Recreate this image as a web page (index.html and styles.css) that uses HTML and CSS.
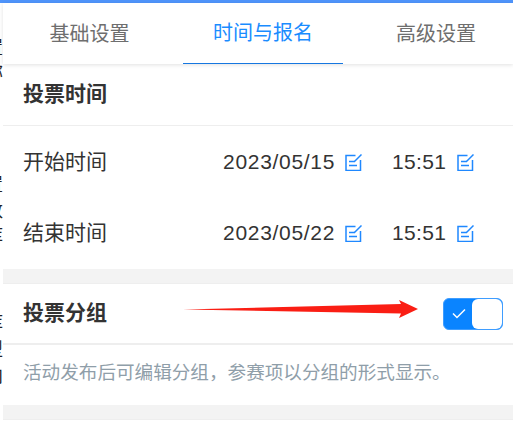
FILE: index.html
```html
<!DOCTYPE html>
<html lang="zh">
<head>
<meta charset="utf-8">
<title>投票时间</title>
<link rel="stylesheet" href="styles.css">
</head>
<body>
<div class="topbar"></div>
<div class="page">
  <div class="strip">
    <span class="g g1">置</span>
    <span class="g g2">称</span>
    <span class="g g3">置</span>
    <span class="g g4">数</span>
    <span class="g g5">库</span>
    <span class="g g6">库</span>
    <span class="g g7">型</span>
    <span class="g g8">向</span>
  </div>
  <main class="main">
    <nav class="tabs">
      <div class="tab tab-a">基础设置</div>
      <div class="tab tab-b active">时间与报名</div>
      <div class="tab tab-c">高级设置</div>
    </nav>
    <section class="section">
      <h2 class="title head-time">投票时间</h2>
      <div class="row row-start">
        <span class="label">开始时间</span>
        <span class="date">2023/05/15</span>
        <svg class="edit" viewBox="0 0 17 17"><path d="M10.5 1.5H1V16.500H15.500V6"/><path d="M4 7.500H10M4 11.500H12"/><path d="M9.500 7.500L16.500 0.500"/></svg>
        <span class="time">15:51</span>
        <svg class="edit edit-last" viewBox="0 0 17 17"><path d="M10.5 1.5H1V16.500H15.500V6"/><path d="M4 7.500H10M4 11.500H12"/><path d="M9.500 7.500L16.500 0.500"/></svg>
      </div>
      <div class="row row-end">
        <span class="label">结束时间</span>
        <span class="date">2023/05/22</span>
        <svg class="edit" viewBox="0 0 17 17"><path d="M10.5 1.5H1V16.500H15.500V6"/><path d="M4 7.500H10M4 11.500H12"/><path d="M9.500 7.500L16.500 0.500"/></svg>
        <span class="time">15:51</span>
        <svg class="edit edit-last" viewBox="0 0 17 17"><path d="M10.5 1.5H1V16.500H15.500V6"/><path d="M4 7.500H10M4 11.500H12"/><path d="M9.500 7.500L16.500 0.500"/></svg>
      </div>
    </section>
    <div class="band"></div>
    <section class="group">
      <h2 class="title group-title">投票分组</h2>
      <div class="switch">
        <svg class="check" viewBox="0 0 14 11"><path d="M1 5.500L5 9.500L13 1.500"/></svg>
        <span class="knob"></span>
      </div>
    </section>
    <p class="desc">活动发布后可编辑分组，参赛项以分组的形式显示。</p>
    <div class="band band-last"></div>
  </main>
</div>
<svg class="arrow" viewBox="0 0 236 20"><polygon points="0,10.500 218,5 216,1 235,10 216,19 218,14.500"/></svg>
</body>
</html>
```
FILE: styles.css
```css
* { box-sizing: border-box; }
html, body { margin: 0; padding: 0; }
body {
  width: 513px;
  height: 425px;
  overflow: hidden;
  position: relative;
  background: #fff;
  font-family: "Liberation Sans", "Noto Sans CJK SC", sans-serif;
  color: #333;
}
.topbar { height: 3px; background: #4f94fb; }
.page { display: flex; height: 422px; }
.strip {
  width: 3px;
  flex: none;
  overflow: hidden;
  display: flex;
  flex-direction: column;
  align-items: flex-end;
  color: #222;
  font-size: 18px;
  line-height: 22px;
  background: #fff;
}
.g { display: block; width: 18px; flex: none; }
.g1 { margin-top: 33.5px; }
.g2 { margin-top: 3px; }
.g3 { margin-top: 90.5px; }
.g4 { margin-top: 4px; }
.g5 { margin-top: 3px; }
.g6 { margin-top: 65px; }
.g7 { margin-top: 5px; }
.g8 { margin-top: 4px; }
.main { flex: 1; min-width: 0; }
.tabs {
  display: grid;
  grid-template-columns: 180px 160px 170px;
  height: 61px;
  font-size: 20px;
  color: #6e6e6e;
  box-shadow: 0 1px 4px rgba(0,0,0,.12);
  position: relative;
}
.tab { display: flex; align-items: center; justify-content: center; padding-bottom: 3px; }
.tab-a { padding-right: 7px; }
.tab-c { padding-left: 16px; }
.active { color: #1a8cff; border-bottom: 1px solid #1677e0; }
.title { margin: 0; font-size: 21px; font-weight: 700; color: #333; }
.head-time {
  height: 62px;
  line-height: 59px;
  padding-left: 20px;
  border-bottom: 1px solid #eee;
}
.group-title { padding-bottom: 6px; }
.row {
  display: flex;
  align-items: center;
  height: 72px;
  padding-left: 20px;
  font-size: 21px;
}
.row-end { height: 71px; padding-bottom: 1px; }
.label { width: 200px; padding-bottom: 4px; }
.date { letter-spacing: .7px; }
.time { margin-left: 30px; letter-spacing: .3px; }
.edit {
  flex: none;
  width: 17px;
  height: 17px;
  margin-left: 10px;
  fill: none;
  stroke: #1f88ff;
  stroke-width: 1.5;
}
.edit-last { margin-left: 11px; }
.band { height: 14px; background: #f3f3f3; }
.group {
  height: 62px;
  padding: 0 10px 0 20px;
  display: flex;
  align-items: center;
  justify-content: space-between;
  border-top: 1px solid #eee;
  border-bottom: 2px solid #eee;
}
.switch {
  width: 60px;
  height: 32px;
  border-radius: 6px;
  background: #0a84ff;
  border: 1px solid #3f9dff;
  display: flex;
  align-items: center;
  justify-content: space-between;
  padding-left: 8px;
}
.check { width: 14px; height: 11px; fill: none; stroke: #fff; stroke-width: 1.5; }
.knob { width: 30px; height: 30px; background: #fff; border-radius: 6px; }
.desc {
  margin: 0;
  height: 60px;
  padding-left: 20px;
  font-size: 18.6px;
  line-height: 56px;
  color: #8f9ea9;
  white-space: nowrap;
}
.band-last { height: 15px; border-bottom: 1px solid #eee; }
.arrow {
  position: absolute;
  left: 183px;
  top: 299px;
  width: 236px;
  height: 20px;
  fill: #fa1e14;
}
```
